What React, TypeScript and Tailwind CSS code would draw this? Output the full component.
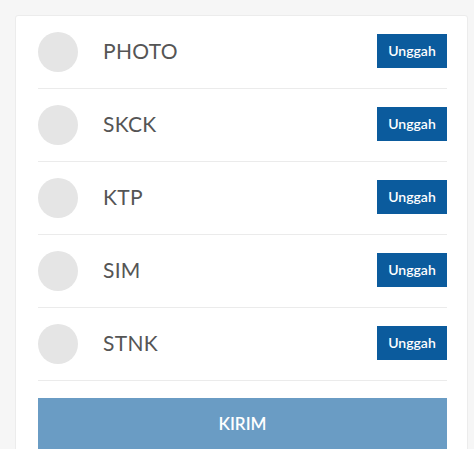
import React from 'react';

const docs = ['PHOTO', 'SKCK', 'KTP', 'SIM', 'STNK'];

export default function App() {
  return (
    <div className="min-h-[449px] bg-[#f6f6f6] pt-[15px] pl-[15px] pr-[6px] font-['Lato','Liberation_Sans',sans-serif]">
      <div className="bg-white border border-[#ececec] rounded-[3px] pl-[22px] pr-[20px] pb-6">
        {docs.map((name) => (
          <div key={name} className="flex items-center h-[73px] border-b border-[#ebebeb]">
            <div className="w-10 h-10 rounded-full bg-[#e5e5e5] shrink-0" />
            <span className="ml-[25px] -mt-[2px] text-[21px] text-[#555] tracking-[0.3px]">{name}</span>
            <button className="ml-auto -mt-[3px] w-[70px] h-[34px] bg-[#0b5b9d] text-white text-[14px] font-semibold">
              Unggah
            </button>
          </div>
        ))}
        <button className="mt-[17px] w-full h-[52px] bg-[#6a9cc4] text-white text-[17px] font-semibold">
          KIRIM
        </button>
      </div>
    </div>
  );
}
